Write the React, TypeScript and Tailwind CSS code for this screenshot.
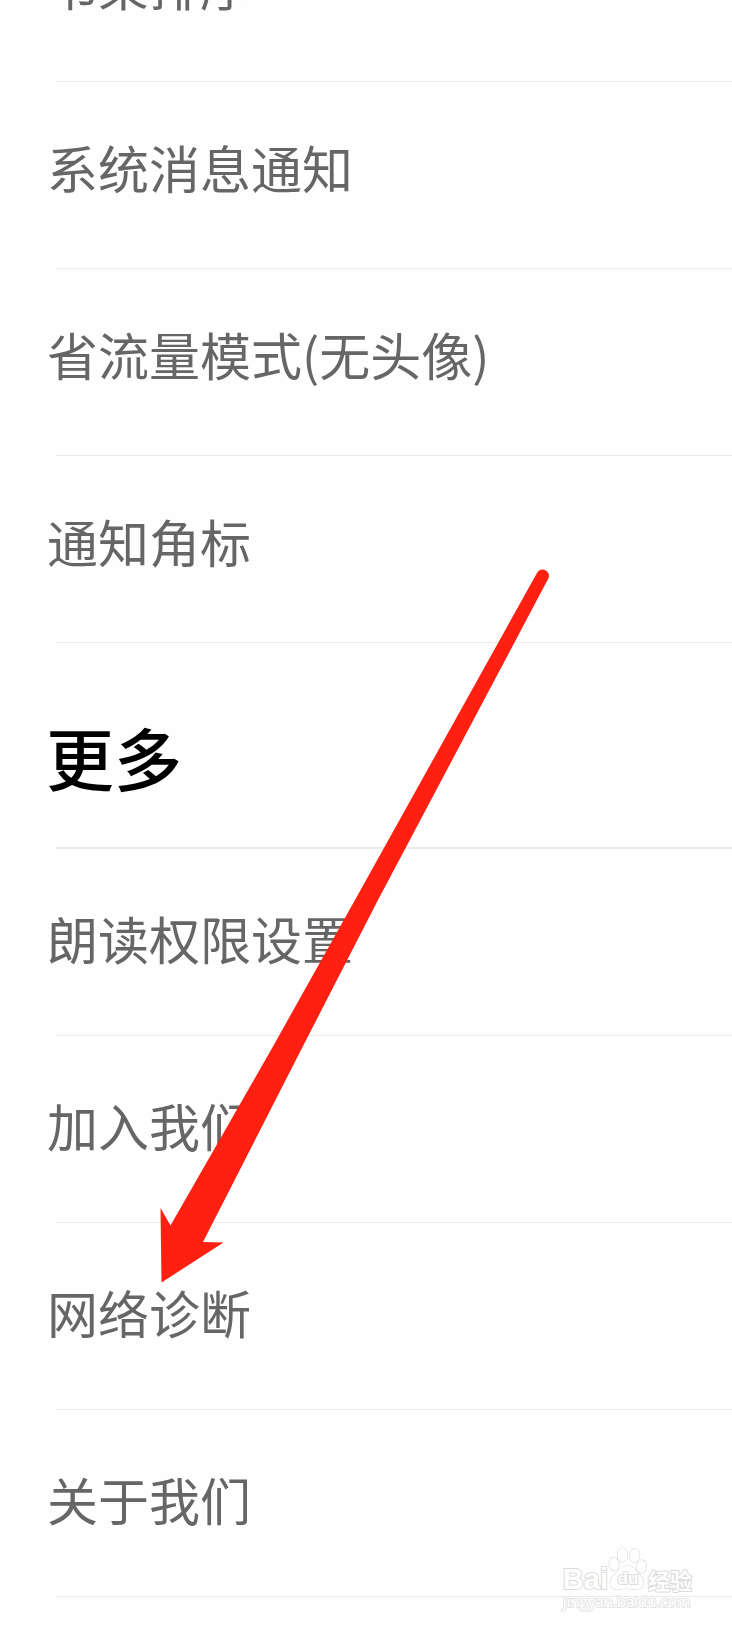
import clsx from 'clsx';

type Row = { label: string; raised?: boolean };

const general: Row[] = [
  { label: '书架排序' },
  { label: '系统消息通知', raised: true },
  { label: '省流量模式(无头像)', raised: true },
  { label: '通知角标', raised: true },
];

const more: Row[] = [
  { label: '朗读权限设置' },
  { label: '加入我们' },
  { label: '网络诊断' },
  { label: '关于我们' },
];

function SettingsList({ rows }: { rows: Row[] }) {
  return (
    <ul className="flex flex-col">
      {rows.map((r) => (
        <li key={r.label} className="flex flex-col">
          <button
            type="button"
            className={clsx(
              'flex h-[186px] items-center pl-[47px] text-left text-[51px] leading-none text-[#666666]',
              r.raised ? 'pb-4' : 'pb-2'
            )}
          >
            {r.label}
          </button>
          <hr className="ml-14 border-t border-[#ebebeb]" />
        </li>
      ))}
    </ul>
  );
}

function Arrow() {
  return (
    <svg
      className="pointer-events-none absolute left-[150px] top-[560px]"
      width="410"
      height="730"
      viewBox="150 560 410 730"
      aria-hidden="true"
    >
      <path
        d="M537 573 A6.2 6.2 0 0 1 548.3 578.6 L378 900 L301 1050 L203 1242 L223.5 1242.5 L161.5 1282.5 L160.5 1208 L170.5 1225.5 L271 1050 L355 900 Z"
        fill="#ff2012"
      />
    </svg>
  );
}

function Paw() {
  return (
    <svg className="col-start-1 row-start-1" width="40" height="44" viewBox="0 0 40 44" fill="#fefefe" stroke="#dcdcdc" strokeWidth="1.2" aria-hidden="true">
      <ellipse cx="6" cy="17" rx="4.800" ry="6.600" transform="rotate(-8 6 17)" />
      <ellipse cx="14.500" cy="8" rx="5" ry="7" />
      <ellipse cx="26.500" cy="8.500" rx="5" ry="6.800" transform="rotate(8 26.500 8.500)" />
      <ellipse cx="33.500" cy="19.500" rx="4.800" ry="6.400" transform="rotate(8 33.500 19.500)" />
      <path d="M19 18.500 C26 18.500 27.500 24 32 28 C37 32.500 37.500 42.500 28 42.500 C24 42.500 22.500 41.500 19 41.500 C15.500 41.500 14 42.500 10.500 42.500 C0.500 42.500 0.500 33 6 28 C10.500 24 12.500 18.500 19 18.500 Z" />
    </svg>
  );
}

function Watermark() {
  return (
    <a
      href="#jingyan"
      className="absolute bottom-4 right-10 flex flex-col whitespace-nowrap text-[#fefefe] [-webkit-text-stroke:2px_#dcdcdc] [paint-order:stroke]"
    >
      <span className="flex items-end">
        <span className="font-['Liberation_Sans',sans-serif] text-[29px] font-bold leading-6">Bai</span>
        <span className="grid">
          <Paw />
          <span className="col-start-1 row-start-1 self-end justify-self-center pb-1 font-['Liberation_Sans',sans-serif] text-[17px] font-bold leading-4">
            du
          </span>
        </span>
        <span className="text-[22px] font-bold leading-6">经验</span>
      </span>
      <span className="font-['Open_Sans',sans-serif] text-[15px] leading-5 [-webkit-text-stroke:2px_#e6e6e6]">
        jingyan.baidu.com
      </span>
    </a>
  );
}

export default function App() {
  return (
    <main className="relative overflow-hidden bg-[#fefefe] pb-[30px] font-['Noto_Sans_CJK_SC',sans-serif]">
      <div className="-mt-[105px] flex flex-col">
        <SettingsList rows={general} />
        <section className="flex flex-col">
          <h2 className="flex h-[204px] items-center pl-[46px] pt-6 text-[68px] font-medium leading-none text-black">更多</h2>
          <hr className="ml-14 border-t-2 border-[#ebebeb]" />
          <SettingsList rows={more} />
        </section>
      </div>
      <Watermark />
      <Arrow />
    </main>
  );
}
